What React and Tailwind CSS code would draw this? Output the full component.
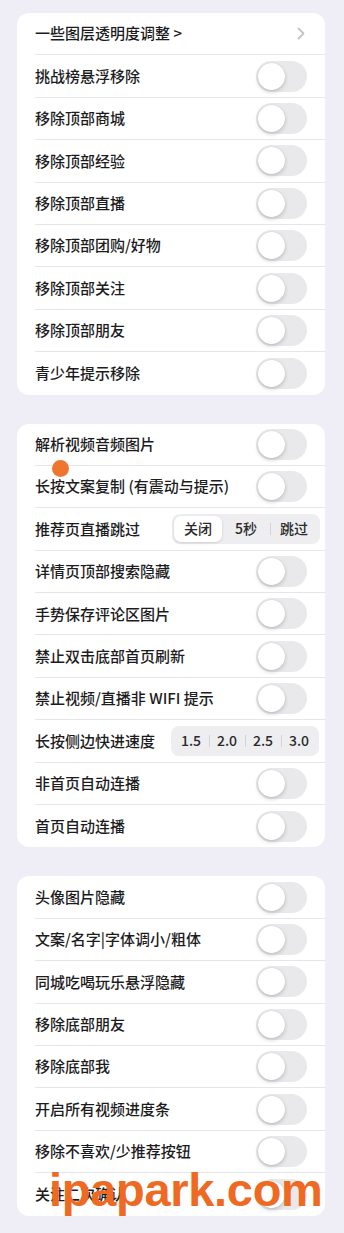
import React from "react";

const font = { fontFamily: '"Noto Sans CJK SC", "Noto Sans", sans-serif' };

function Toggle() {
  return (
    <div className="relative w-[51px] h-[31px] rounded-full bg-[#e9e9eb] shrink-0">
      <div className="absolute left-[2px] top-[2px] w-[27px] h-[27px] rounded-full bg-white shadow-[0_2px_4px_rgba(0,0,0,0.18),0_0_1px_rgba(0,0,0,0.15)]" />
    </div>
  );
}

function Segmented({ items, selected }) {
  return (
    <div className="flex items-center w-[148px] h-[30px] rounded-[8px] bg-[#eeeef0] p-[2px] shrink-0">
      {items.map((it, i) => {
        const isSel = i === selected;
        const showSep =
          i > 0 && selected !== i && selected !== i - 1;
        return (
          <div key={i} className="relative flex-1 h-full flex items-center justify-center">
            {showSep && (
              <div className="absolute left-0 top-[7px] bottom-[7px] w-px bg-[#d4d4d8]" />
            )}
            <div
              className={
                isSel
                  ? "w-full h-full rounded-[7px] bg-white shadow-[0_1px_3px_rgba(0,0,0,0.14)] flex items-center justify-center"
                  : "w-full h-full flex items-center justify-center"
              }
            >
              <span className="text-[14px] font-medium text-[#2a2a2c]">{it}</span>
            </div>
          </div>
        );
      })}
    </div>
  );
}

function Row({ label, right, last, rightPad = "pr-[18px]" }) {
  return (
    <div className="pl-[18px] h-[42.4px]">
      <div
        className={
          "flex items-center justify-between h-full " +
          rightPad +
          (last ? "" : " border-b border-[#e6e6ea]")
        }
      >
        <span className="text-[15px] font-medium text-[#1c1c1e] whitespace-nowrap">{label}</span>
        {right}
      </div>
    </div>
  );
}

function Card({ children }) {
  return <div className="bg-white rounded-[12px] overflow-hidden">{children}</div>;
}

const card1 = [
  "挑战榜悬浮移除",
  "移除顶部商城",
  "移除顶部经验",
  "移除顶部直播",
  "移除顶部团购/好物",
  "移除顶部关注",
  "移除顶部朋友",
  "青少年提示移除",
];

const card3 = [
  "头像图片隐藏",
  "文案/名字|字体调小/粗体",
  "同城吃喝玩乐悬浮隐藏",
  "移除底部朋友",
  "移除底部我",
  "开启所有视频进度条",
  "移除不喜欢/少推荐按钮",
  "关注二次确认",
];

export default function App() {
  return (
    <div className="relative w-[344px] h-[1233px] bg-[#efedf5] pt-[13px] pl-[17px] pr-[19px]" style={font}>
      <div className="flex flex-col gap-[29px]">
        <Card>
          <Row
            label="一些图层透明度调整 >"
            right={
              <svg width="8" height="13" viewBox="0 0 8 13" className="mr-[2px]">
                <path d="M1.5 1.5 L6.5 6.5 L1.5 11.5" fill="none" stroke="#c4c4c8" strokeWidth="1.8" strokeLinecap="round" strokeLinejoin="round" />
              </svg>
            }
          />
          {card1.map((l, i) => (
            <Row key={l} label={l} right={<Toggle />} last={i === card1.length - 1} />
          ))}
        </Card>

        <Card>
          <Row label="解析视频音频图片" right={<Toggle />} />
          <Row label="长按文案复制 (有震动与提示)" right={<Toggle />} />
          <Row label="推荐页直播跳过" rightPad="pr-[5px]" right={<Segmented items={["关闭", "5秒", "跳过"]} selected={0} />} />
          <Row label="详情页顶部搜索隐藏" right={<Toggle />} />
          <Row label="手势保存评论区图片" right={<Toggle />} />
          <Row label="禁止双击底部首页刷新" right={<Toggle />} />
          <Row label="禁止视频/直播非 WIFI 提示" right={<Toggle />} />
          <Row label="长按侧边快进速度" rightPad="pr-[6px]" right={<Segmented items={["1.5", "2.0", "2.5", "3.0"]} selected={-1} />} />
          <Row label="非首页自动连播" right={<Toggle />} />
          <Row label="首页自动连播" right={<Toggle />} last />
        </Card>

        <Card>
          {card3.map((l, i) => (
            <Row key={l} label={l} right={<Toggle />} last={i === card3.length - 1} />
          ))}
        </Card>
      </div>

      <div className="absolute left-[52px] top-[460px] w-[17px] h-[17px] rounded-full bg-[#ef7630]" />

      <div
        className="absolute left-[49px] top-[1166px] text-[47px] leading-none font-bold text-[#ee6a22] tracking-[-0.3px]"
        style={{ fontFamily: '"Liberation Sans", Arial, sans-serif' }}
      >
        ipapark.com
      </div>
    </div>
  );
}
